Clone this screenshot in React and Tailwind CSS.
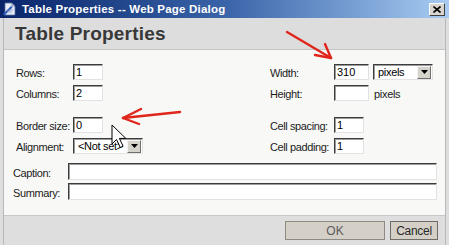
import React from "react";

function Field({ w, h = "h-[16px]", value }) {
    return (
        <div
            className={`${w} ${h} bg-white border border-t-[#3c3c3c] border-l-[#3c3c3c] border-r-[#e2e2e2] border-b-[#e2e2e2] shadow-[inset_1px_1px_0_#9c9c9c] pl-[2px] text-[11px] leading-[14px] text-black`}
        >
            {value}
        </div>
    );
}

function Select({ w, value }) {
    return (
        <div className={`${w} h-[16px] flex items-center bg-white border border-t-[#3c3c3c] border-l-[#3c3c3c] border-r-[#e2e2e2] border-b-[#e2e2e2] shadow-[inset_1px_1px_0_#9c9c9c]`}>
            <span className="flex-1 pl-[4px] text-[11px] leading-[14px] tracking-[-0.3px] text-black overflow-hidden whitespace-nowrap">
                {value}
            </span>
            <span className="w-[14px] h-[13px] mr-[1px] flex items-center justify-center bg-[#d6d3cc] border border-t-[#f4f4f4] border-l-[#f4f4f4] border-r-[#6e6e6e] border-b-[#6e6e6e]">
                <svg width="7" height="4" viewBox="0 0 7 4">
                    <path d="M0 0h7L3.5 4z" fill="#000" />
                </svg>
            </span>
        </div>
    );
}

function Row({ label, labelW, children, className = "" }) {
    return (
        <div className={`flex items-center ${className}`}>
            <span className={`${labelW} text-[11px] leading-[14px] tracking-[-0.4px] text-[#1c1c1c] whitespace-nowrap pt-[2px]`}>
                {label}
            </span>
            {children}
        </div>
    );
}

function TitleIcon() {
    return (
        <svg width="14" height="14" viewBox="0 0 14 14">
            <path d="M3 1h7l3 3v9H3z" fill="#e8eef8" stroke="#5a6f9a" strokeWidth="0.8" />
            <path d="M10 1v3h3" fill="none" stroke="#5a6f9a" strokeWidth="0.8" />
            <path d="M1 12L9 4l1.5 1.5L2.5 13.5z" fill="#2f5fb8" />
            <path d="M5 8h6M5 10h5" stroke="#7f95c4" strokeWidth="0.8" />
        </svg>
    );
}

export default function App() {
    return (
        <div className="relative w-[449px] h-[245px] overflow-hidden flex flex-col bg-[#dedede] font-['Liberation_Sans',Arial,sans-serif] select-none">
            {/* Title bar */}
            <div className="h-[18px] shrink-0 flex items-center bg-gradient-to-r from-[#0a246a] via-[#3a64a8] to-[#a8ccf2] pl-[2px] pr-[4px]">
                <TitleIcon />
                <span className="ml-[6px] text-[11.5px] leading-[14px] font-bold tracking-[0.2px] text-white whitespace-nowrap">
                    Table Properties -- Web Page Dialog
                </span>
                <span className="ml-auto w-[16px] h-[13px] flex items-center justify-center bg-[#d8d5ce] border border-t-[#ffffff] border-l-[#ffffff] border-r-[#404040] border-b-[#404040]">
                    <svg width="8" height="7" viewBox="0 0 8 7">
                        <path d="M0.5 0.5L7.5 6.5M7.5 0.5L0.5 6.5" stroke="#000" strokeWidth="1.6" />
                    </svg>
                </span>
            </div>

            {/* Dialog body */}
            <div className="flex-1 flex flex-col ml-[3px] mr-[3px] border-l border-r border-l-[#b8b8b8] border-r-[#b8b8b8]">
                {/* Heading */}
                <div className="h-[32px] shrink-0 flex items-center pl-[11px] bg-[#dddddd] border-b border-b-[#c4c4c4]">
                    <h1 className="text-[19px] leading-[22px] font-bold tracking-[0.2px] text-[#383838]">Table Properties</h1>
                </div>

                {/* Form */}
                <div className="h-[166px] shrink-0 bg-[#f8f8f6] pt-[14px] border-b border-b-[#c8c8c8]">
                    <div className="flex pl-[12px]">
                        <div className="w-[254px] flex flex-col">
                            <Row label="Rows:" labelW="w-[57px]">
                                <Field w="w-[30px]" value="1" />
                            </Row>
                            <Row label="Columns:" labelW="w-[57px]" className="mt-[5px]">
                                <Field w="w-[30px]" value="2" />
                            </Row>
                            <Row label="Border size:" labelW="w-[57px]" className="mt-[16px]">
                                <Field w="w-[30px]" value="0" />
                            </Row>
                            <Row label="Alignment:" labelW="w-[57px]" className="mt-[5px]">
                                <Select w="w-[70px]" value="<Not set>" />
                            </Row>
                        </div>
                        <div className="flex flex-col">
                            <Row label="Width:" labelW="w-[64px]">
                                <Field w="w-[35px]" value="310" />
                                <div className="ml-[4px]">
                                    <Select w="w-[60px]" value="pixels" />
                                </div>
                            </Row>
                            <Row label="Height:" labelW="w-[64px]" className="mt-[5px]">
                                <Field w="w-[35px]" value="" />
                                <span className="ml-[5px] text-[11px] leading-[14px] tracking-[-0.3px] text-[#1c1c1c] pt-[2px]">pixels</span>
                            </Row>
                            <Row label="Cell spacing:" labelW="w-[64px]" className="mt-[16px]">
                                <Field w="w-[30px]" value="1" />
                            </Row>
                            <Row label="Cell padding:" labelW="w-[64px]" className="mt-[5px]">
                                <Field w="w-[30px]" value="1" />
                            </Row>
                        </div>
                    </div>

                    <div className="flex flex-col pl-[9px] mt-[9px]">
                        <Row label="Caption:" labelW="w-[55px]">
                            <Field w="w-[369px]" h="h-[17px]" value="" />
                        </Row>
                        <Row label="Summary:" labelW="w-[55px]" className="mt-[3px]">
                            <Field w="w-[369px]" h="h-[17px]" value="" />
                        </Row>
                    </div>
                </div>

                {/* Buttons */}
                <div className="flex-1 flex justify-end items-start pt-[5px] pr-[7px] gap-[5px] bg-[#dedede]">
                    <button className="w-[100px] h-[19px] bg-[#d4d0c8] border border-[#8c8a82] text-[12px] leading-[16px] text-[#5a5a5a]">
                        OK
                    </button>
                    <button className="w-[48px] h-[19px] bg-[#d4d0c8] border border-[#6e6c66] text-[12px] leading-[16px] tracking-[-0.3px] text-[#2a2a2a]">
                        Cancel
                    </button>
                </div>
            </div>

            {/* Annotation arrows and mouse pointer lying over the dialog */}
            <svg className="absolute left-0 top-0 pointer-events-none" width="449" height="245" viewBox="0 0 449 245">
                <g stroke="#e0261c" strokeWidth="2.4" strokeLinecap="round" fill="none">
                    <path d="M287 32L331 58" />
                    <path d="M331 58L315 55" />
                    <path d="M331 58L325 44" />
                    <path d="M180 112L123 118" />
                    <path d="M123 118L141 109" />
                    <path d="M123 118L139 124" />
                </g>
                <path
                    d="M112 125v19l4.5-4.5 3.8 8 2.8-1.3-3.7-7.8h6.4z"
                    fill="#fff"
                    stroke="#000"
                    strokeWidth="1"
                    strokeLinejoin="round"
                />
            </svg>
        </div>
    );
}
